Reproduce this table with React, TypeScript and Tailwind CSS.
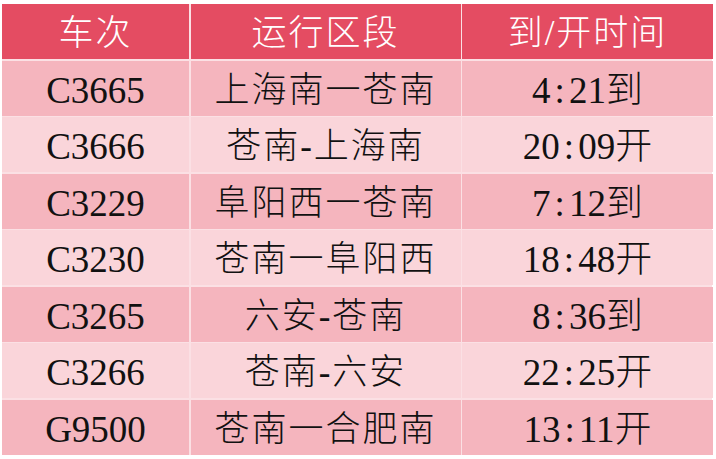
const rows = [
  ['C3665', '上海南一苍南', '4:21到'],
  ['C3666', '苍南-上海南', '20:09开'],
  ['C3229', '阜阳西一苍南', '7:12到'],
  ['C3230', '苍南一阜阳西', '18:48开'],
  ['C3265', '六安-苍南', '8:36到'],
  ['C3266', '苍南-六安', '22:25开'],
  ['G9500', '苍南一合肥南', '13:11开'],
];

const font = { fontFamily: '"Liberation Serif", "Noto Sans CJK SC", serif' };

function Time({ value }: { value: string }) {
  const [h, rest] = value.split(':');
  return (
    <span>
      {h}
      <span className="mx-[4px]">:</span>
      {rest}
    </span>
  );
}

export default function App() {
  return (
    <div className="w-[716px] h-[459px] bg-white pt-[4px] pl-[2px] overflow-hidden" style={font}>
      <div className="w-[710px] grid grid-cols-[187px_270px_251px] grid-rows-[55px_repeat(7,55px)] gap-[1.5px] bg-[#fbe0e4] text-[35px] leading-none font-light">
        {['车次', '运行区段', '到/开时间'].map((h) => (
          <div key={h} className="bg-[#e44c62] text-white flex items-center justify-center tracking-[2px] pt-[4px]">
            {h}
          </div>
        ))}
        {rows.map((r, i) => {
          const bg = i % 2 === 0 ? 'bg-[#f5b5be]' : 'bg-[#fad5da]';
          return [
            <div key={r[0]} className={`${bg} text-[#111] flex items-center justify-center text-[37px] pt-[4px]`}>
              {r[0]}
            </div>,
            <div key={r[0] + 'b'} className={`${bg} text-[#111] flex items-center justify-center tracking-[2px] pt-[4px]`}>
              {r[1]}
            </div>,
            <div key={r[0] + 'c'} className={`${bg} text-[#111] flex items-center justify-center text-[37px] pt-[4px]`}>
              <Time value={r[2]} />
            </div>,
          ];
        })}
      </div>
    </div>
  );
}
